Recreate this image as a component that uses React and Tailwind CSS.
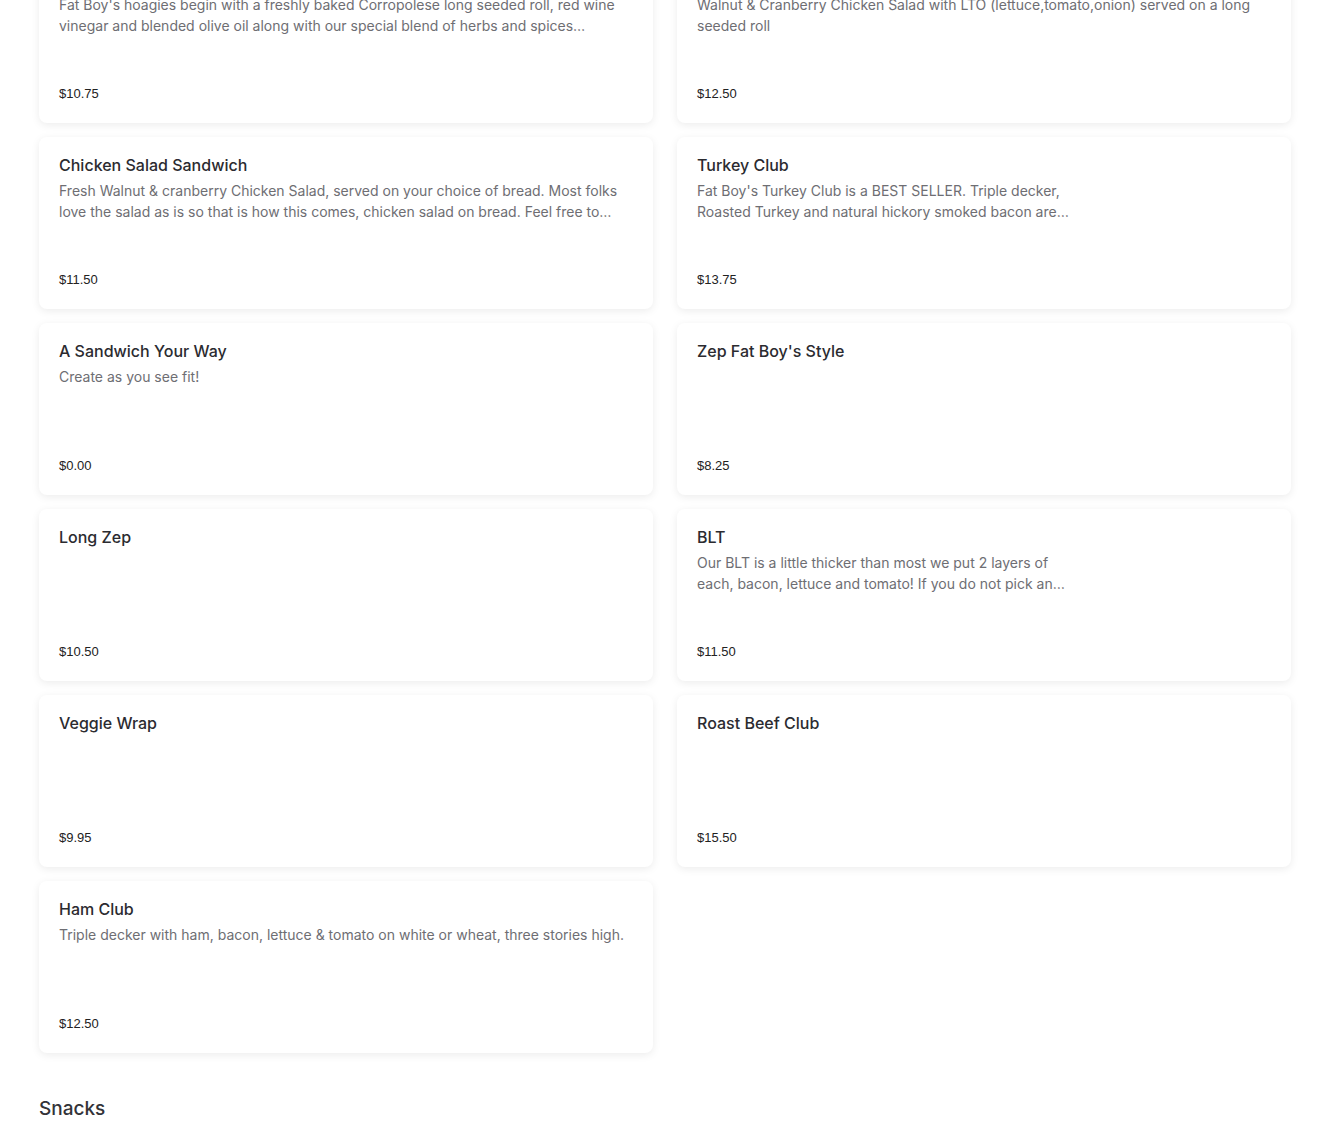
const items = [
  {
    name: null,
    desc: "Fat Boy's hoagies begin with a freshly baked Corropolese long seeded roll, red wine vinegar and blended olive oil along with our special blend of herbs and spices seasoned to perfection.",
    price: "$10.75",
  },
  {
    name: null,
    desc: "Walnut & Cranberry Chicken Salad with LTO (lettuce,tomato,onion) served on a long seeded roll",
    price: "$12.50",
  },
  {
    name: "Chicken Salad Sandwich",
    desc: "Fresh Walnut & cranberry Chicken Salad, served on your choice of bread. Most folks love the salad as is so that is how this comes, chicken salad on bread. Feel free to accessorize.",
    price: "$11.50",
  },
  {
    name: "Turkey Club",
    desc: "Fat Boy's Turkey Club is a BEST SELLER. Triple decker, Roasted Turkey and natural hickory smoked bacon are layered with lettuce and tomato.",
    price: "$13.75",
    narrow: true,
  },
  { name: "A Sandwich Your Way", desc: "Create as you see fit!", price: "$0.00" },
  { name: "Zep Fat Boy's Style", desc: "", price: "$8.25" },
  { name: "Long Zep", desc: "", price: "$10.50" },
  {
    name: "BLT",
    desc: "Our BLT is a little thicker than most we put 2 layers of each, bacon, lettuce and tomato! If you do not pick an option we will serve it on white.",
    price: "$11.50",
    narrow: true,
  },
  { name: "Veggie Wrap", desc: "", price: "$9.95" },
  { name: "Roast Beef Club", desc: "", price: "$15.50" },
  {
    name: "Ham Club",
    desc: "Triple decker with ham, bacon, lettuce & tomato on white or wheat, three stories high.",
    price: "$12.50",
  },
];

function ItemCard({ item }) {
  return (
    <div className="h-[172px] bg-white rounded-lg shadow-[0_2px_8px_rgba(0,0,0,0.08)] px-5 pt-4 pb-[19px] flex flex-col">
      {item.name ? (
        <h3 className="text-[16px] leading-6 font-medium text-[#2b2b30]">{item.name}</h3>
      ) : (
        <div className="h-6" />
      )}
      {item.desc && (
        <p
          className={
            "mt-[3px] text-[14px] leading-[21px] text-[#6e6e73] line-clamp-2 " +
            (item.narrow ? "max-w-[372px]" : "")
          }
        >
          {item.desc}
        </p>
      )}
      <div className="mt-auto text-[13px] leading-5 text-[#222] font-['Liberation_Sans',Arial,sans-serif]">
        {item.price}
      </div>
    </div>
  );
}

export default function App() {
  return (
    <div className="h-[1136px] overflow-hidden bg-white font-['Inter',sans-serif]">
      <div className="-mt-[49px] px-[39px]">
        <div className="grid grid-cols-2 gap-x-6 gap-y-[14px]">
          {items.map((item, i) => (
            <ItemCard key={i} item={item} />
          ))}
        </div>
        <h2 className="mt-[42px] text-[19px] leading-7 font-medium text-[#333338]">Snacks</h2>
      </div>
    </div>
  );
}
